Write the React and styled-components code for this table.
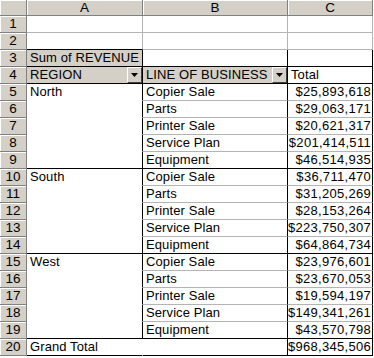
import React from "react";
import styled, { createGlobalStyle } from "styled-components";

const Global = createGlobalStyle`
  html, body { margin: 0; padding: 0; background: #fff; }
  body { font-family: "Liberation Sans", Arial, sans-serif; }
`;

const GRID = "#b4b4b4";
const BLACK = "#000";
const NONE = "#fff";

const Sheet = styled.div`
  display: grid;
  grid-template-columns: 27px 116px 145px 85px;
  grid-template-rows: 16px repeat(20, 17px);
  width: 373px;
  font-size: 13px;
  color: #000;
`;

const Corner = styled.div`
  box-sizing: border-box;
  background: #d4d0c8;
  border-right: 1px solid #808080;
  border-bottom: 1px solid #808080;
  box-shadow: inset 1px 1px 0 #fff;
`;

const ColHead = styled.div`
  box-sizing: border-box;
  background: #d4d0c8;
  border-right: 1px solid #808080;
  border-bottom: 1px solid #808080;
  box-shadow: inset 1px 1px 0 #fff;
  display: flex;
  align-items: center;
  justify-content: center;
  font-size: 13.5px;
  line-height: 15px;
`;

const RowHead = styled.div`
  box-sizing: border-box;
  background: #d4d0c8;
  border-right: 1px solid #808080;
  border-bottom: 1px solid #808080;
  box-shadow: inset 1px 1px 0 #fff;
  display: flex;
  align-items: center;
  justify-content: center;
  font-size: 13.5px;
  line-height: 16px;
`;

const Cell = styled.div`
  box-sizing: border-box;
  background: ${(p) => p.$bg || "#fff"};
  border-right: 1px solid ${(p) => p.$r || GRID};
  border-bottom: 1px solid ${(p) => p.$b || GRID};
  display: flex;
  align-items: center;
  justify-content: ${(p) => (p.$right ? "flex-end" : "flex-start")};
  padding: 0 ${(p) => (p.$right ? "1px" : "0")} 0 ${(p) => (p.$right ? "0" : "3px")};
  letter-spacing: ${(p) => (p.$right ? "0.3px" : "0.1px")};
  line-height: 16px;
  white-space: nowrap;
`;

const DropBtn = styled.span`
  box-sizing: border-box;
  margin-left: auto;
  width: 15px;
  height: 16px;
  background: #d4d0c8;
  border-top: 1px solid #fff;
  border-left: 1px solid #fff;
  border-right: 1px solid #404040;
  border-bottom: 1px solid #404040;
  display: flex;
  align-items: center;
  justify-content: center;
`;

const Arrow = () => (
  <svg width="7" height="4" viewBox="0 0 7 4">
    <polygon points="0,0 7,0 3.5,4" fill="#000" />
  </svg>
);

const groups = [
  {
    region: "North",
    rows: [
      ["Copier Sale", "$25,893,618"],
      ["Parts", "$29,063,171"],
      ["Printer Sale", "$20,621,317"],
      ["Service Plan", "$201,414,511"],
      ["Equipment", "$46,514,935"],
    ],
  },
  {
    region: "South",
    rows: [
      ["Copier Sale", "$36,711,470"],
      ["Parts", "$31,205,269"],
      ["Printer Sale", "$28,153,264"],
      ["Service Plan", "$223,750,307"],
      ["Equipment", "$64,864,734"],
    ],
  },
  {
    region: "West",
    rows: [
      ["Copier Sale", "$23,976,601"],
      ["Parts", "$23,670,053"],
      ["Printer Sale", "$19,594,197"],
      ["Service Plan", "$149,341,261"],
      ["Equipment", "$43,570,798"],
    ],
  },
];

export default function App() {
  const cells = [];
  cells.push(<Corner key="corner" />);
  ["A", "B", "C"].forEach((c) => cells.push(<ColHead key={"h" + c}>{c}</ColHead>));

  [1, 2].forEach((n) => {
    cells.push(<RowHead key={"r" + n}>{n}</RowHead>);
    cells.push(<Cell key={"a" + n} $b={n === 2 ? BLACK : GRID} />);
    cells.push(<Cell key={"b" + n} />);
    cells.push(<Cell key={"c" + n} />);
  });

  cells.push(<RowHead key="r3">3</RowHead>);
  cells.push(
    <Cell key="a3" $bg="#d4d0c8" $r={BLACK} $b={BLACK}>
      Sum of REVENUE
    </Cell>
  );
  cells.push(<Cell key="b3" $r={BLACK} $b={BLACK} />);
  cells.push(<Cell key="c3" $r={BLACK} $b={BLACK} />);

  cells.push(<RowHead key="r4">4</RowHead>);
  cells.push(
    <Cell key="a4" $bg="#d4d0c8" $r={BLACK} $b={BLACK}>
      REGION
      <DropBtn>
        <Arrow />
      </DropBtn>
    </Cell>
  );
  cells.push(
    <Cell key="b4" $bg="#d4d0c8" $r={BLACK} $b={BLACK}>
      LINE OF BUSINESS
      <DropBtn>
        <Arrow />
      </DropBtn>
    </Cell>
  );
  cells.push(
    <Cell key="c4" $r={BLACK} $b={BLACK}>
      Total
    </Cell>
  );

  let n = 5;
  groups.forEach((g) => {
    g.rows.forEach(([line, val], i) => {
      const last = i === g.rows.length - 1;
      const rb = last ? BLACK : GRID;
      cells.push(<RowHead key={"r" + n}>{n}</RowHead>);
      cells.push(
        <Cell key={"a" + n} $r={BLACK} $b={last ? BLACK : NONE}>
          {i === 0 ? g.region : ""}
        </Cell>
      );
      cells.push(
        <Cell key={"b" + n} $r={BLACK} $b={rb}>
          {line}
        </Cell>
      );
      cells.push(
        <Cell key={"c" + n} $r={BLACK} $b={rb} $right>
          {val}
        </Cell>
      );
      n++;
    });
  });

  cells.push(<RowHead key="r20">20</RowHead>);
  cells.push(
    <Cell key="a20" $r={NONE} $b={BLACK}>
      Grand Total
    </Cell>
  );
  cells.push(<Cell key="b20" $r={BLACK} $b={BLACK} />);
  cells.push(
    <Cell key="c20" $r={BLACK} $b={BLACK} $right>
      $968,345,506
    </Cell>
  );

  return (
    <>
      <Global />
      <Sheet>{cells}</Sheet>
    </>
  );
}
